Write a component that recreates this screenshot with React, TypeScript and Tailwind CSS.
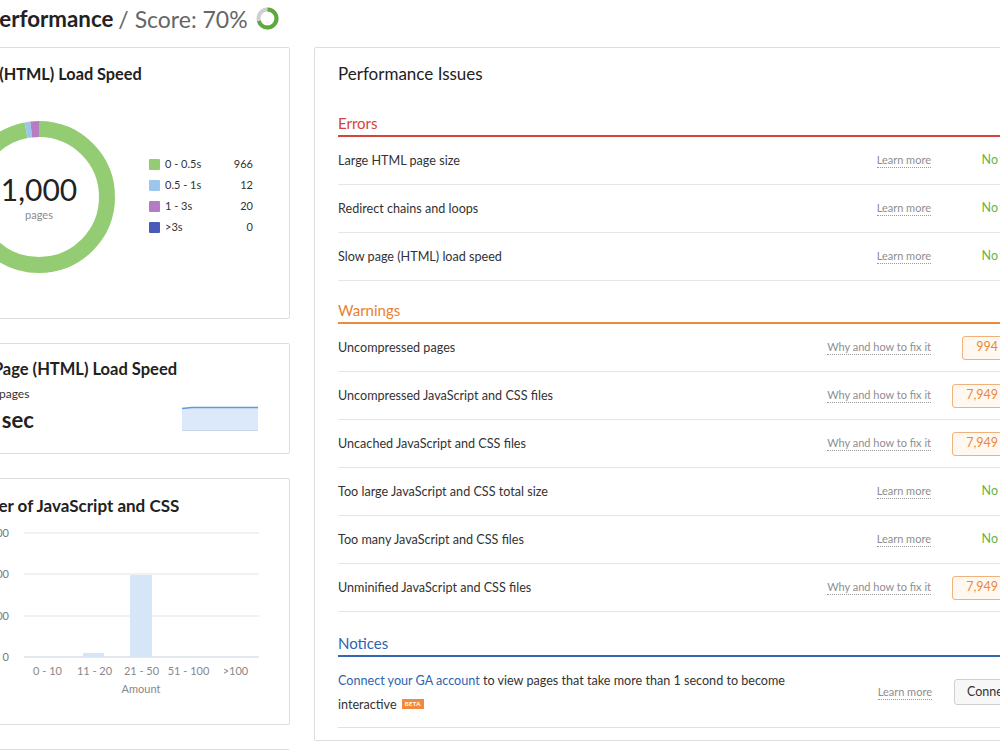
import React from "react";

const C = 2 * Math.PI * 68;
const FONT = "Lato, sans-serif";

function Donut() {
  const segs = [
    { v: 966, c: "#94cc74" },
    { v: 12, c: "#9cc6ec" },
    { v: 20, c: "#b57cc3" },
  ];
  const total = 998;
  let acc = 0;
  return (
    <svg width="152" height="152" viewBox="0 0 152 152">
      <g transform="rotate(-90 76 76)">
        {segs.map((s, i) => {
          const l = (s.v / total) * C;
          const el = (
            <circle
              key={i}
              cx="76"
              cy="76"
              r="68"
              fill="none"
              stroke={s.c}
              strokeWidth="16"
              strokeDasharray={`${l} ${C - l}`}
              strokeDashoffset={-acc}
            />
          );
          acc += l;
          return el;
        })}
      </g>
    </svg>
  );
}

function ScoreIcon() {
  const c = 2 * Math.PI * 9;
  return (
    <svg width="23" height="23" viewBox="0 0 23 23">
      <g transform="rotate(-90 11.5 11.5)">
        <circle cx="11.5" cy="11.5" r="9" fill="none" stroke="#cfcfcf" strokeWidth="4" />
        <circle
          cx="11.5"
          cy="11.5"
          r="9"
          fill="none"
          stroke="#5aab3a"
          strokeWidth="4"
          strokeDasharray={`${c * 0.7} ${c * 0.3}`}
        />
      </g>
    </svg>
  );
}

function BarChart() {
  // svg x = page x + 41, y = page y - 522
  const grid = [534, 575, 617, 658].map((y) => y - 522);
  const labels = ["1,500", "1,000", "500", "0"];
  const cats = ["0 - 10", "11 - 20", "21 - 50", "51 - 100", ">100"];
  const x0 = 23 + 41;
  const w = 47;
  return (
    <svg width="299" height="180" viewBox="0 0 299 180">
      {grid.map((y, i) => (
        <g key={i}>
          <line x1={x0} x2={258 + 41} y1={y} y2={y} stroke={i === 3 ? "#c9d3df" : "#e3e3e3"} strokeWidth="1" />
          <text x={8 + 41} y={y + 4} textAnchor="end" fontSize="11" fill="#777" fontFamily={FONT}>
            {labels[i]}
          </text>
        </g>
      ))}
      <rect x={82 + 41} y={654 - 522} width={21} height={4} fill="#d6e6f7" />
      <rect x={129 + 41} y={576 - 522} width={22} height={82} fill="#d6e6f7" />
      {cats.map((c, i) => (
        <text key={c} x={x0 + w * i + w / 2} y={676 - 522} textAnchor="middle" fontSize="11" fill="#888" fontFamily={FONT}>
          {c}
        </text>
      ))}
      <text x={140 + 41} y={694 - 522} textAnchor="middle" fontSize="11" fill="#888" fontFamily={FONT}>
        Amount
      </text>
    </svg>
  );
}

function LearnMore({ text = "Learn more" }: { text?: string }) {
  return (
    <span className="block text-[11px] text-[#8e8e8e] border-b border-dotted border-[#9a9a9a] leading-[14px] whitespace-nowrap">
      {text}
    </span>
  );
}

function Status({ v }: { v: string | null }) {
  if (!v)
    return <span className="text-[12.5px] text-[#6cb33f] pr-[14px] whitespace-nowrap">No issues</span>;
  return (
    <span className="h-[24px] px-[13px] flex items-center rounded-[3px] border border-[#f0b27a] bg-[#fff8f1] text-[12.5px] text-[#e8883a] whitespace-nowrap">
      {v} issues
    </span>
  );
}

function Row({ t, fix, v }: { t: string; fix?: boolean; v: string | null }) {
  return (
    <div className="h-[48px] flex items-center border-b border-[#e6e6e6]">
      <div className="flex-1 text-[12.6px] text-[#333] pt-[1px]">{t}</div>
      <div className="mr-[21px]">
        <LearnMore text={fix ? "Why and how to fix it" : "Learn more"} />
      </div>
      <div className="w-[96px] flex justify-end">
        <Status v={v} />
      </div>
    </div>
  );
}

function SectionHead({ t, color, mt }: { t: string; color: string; mt: string }) {
  return (
    <div className={`${mt} pb-[2px] border-b-2 ${color} text-[15px] leading-[20px]`}>{t}</div>
  );
}

export default function App() {
  return (
    <div className="w-[1000px] h-[750px] overflow-hidden bg-white font-['Lato',sans-serif] text-[#222]">
      <div className="ml-[-65px]">
        <div className="h-[38px] mb-[9px] pl-[51px] flex items-center whitespace-nowrap">
          <span className="text-[22.3px] font-bold text-[#222]">Performance</span>
          <span className="text-[23px] text-[#666] ml-[5px]">/ Score: 70%</span>
          <span className="ml-[8px] mt-[-2px]">
            <ScoreIcon />
          </span>
        </div>
        <div className="flex gap-[24px] items-start">
          <div className="w-[355px] flex flex-col gap-[24px] shrink-0">
            <div className="border border-[#dedede] rounded-[2px] pt-[16px] pl-[24px] pr-[31px] pb-[45px]">
              <div className="text-[16.3px] leading-[20px] font-bold whitespace-nowrap">Page (HTML) Load Speed</div>
              <div className="mt-[37px] flex items-center">
                <div className="relative ml-[3px] w-[152px] h-[152px]">
                  <Donut />
                  <div className="absolute inset-0 flex flex-col items-center justify-center">
                    <div className="text-[30px] leading-[34px] text-[#222]">1,000</div>
                    <div className="text-[11px] leading-[16px] text-[#8a8a8a] mt-[1px]">pages</div>
                  </div>
                </div>
                <div className="ml-[34px] w-[104px] flex flex-col mt-[-2px]">
                  {[
                    ["#94cc74", "0 - 0.5s", "966"],
                    ["#9cc6ec", "0.5 - 1s", "12"],
                    ["#b57cc3", "1 - 3s", "20"],
                    ["#4a5ab8", ">3s", "0"],
                  ].map(([c, l, n]) => (
                    <div key={l} className="h-[21px] flex items-center text-[11px] text-[#333]">
                      <span className="w-[11px] h-[11px] rounded-[1px]" style={{ background: c }} />
                      <span className="ml-[5px] flex-1">{l}</span>
                      <span>{n}</span>
                    </div>
                  ))}
                </div>
              </div>
            </div>
            <div className="border border-[#dedede] rounded-[2px] pt-[15px] pl-[24px] pr-[31px] pb-[19px]">
              <div className="text-[16.5px] leading-[20px] font-bold whitespace-nowrap ml-[-3px]">Avg. Page (HTML) Load Speed</div>
              <div className="mt-[7px] flex justify-between items-start">
                <div className="flex flex-col">
                  <div className="text-[12px] leading-[16px] text-[#333] ml-[4px]">For all pages</div>
                  <div className="text-[22px] leading-[28px] font-bold mt-[4px] ml-[-7px]">0.14 sec</div>
                </div>
                <svg width="76" height="25" viewBox="0 0 76 25" className="mt-[20px]">
                  <path d="M0 2.5 L10 1.5 L76 1.5 L76 25 L0 25 Z" fill="#dbe9fa" />
                  <path d="M0 2.5 L10 1.5 L76 1.5" fill="none" stroke="#5c9be2" strokeWidth="1.6" />
                  <line x1="0" x2="76" y1="24.5" y2="24.5" stroke="#c7d8ee" strokeWidth="1" />
                </svg>
              </div>
            </div>
            <div className="border border-[#dedede] rounded-[2px] pt-[17px] pl-[24px] pr-[31px] pb-[23px]">
              <div className="text-[17px] leading-[20px] font-bold whitespace-nowrap ml-[-8px]">Number of JavaScript and CSS</div>
              <div className="mt-[5px]">
                <BarChart />
              </div>
            </div>
            <div className="border border-[#dedede] rounded-[2px] h-[200px]" />
          </div>

          <div className="w-[758px] shrink-0 border border-[#dedede] rounded-[2px] pt-[16px] px-[23px] pb-[12px]">
            <div className="text-[17px] leading-[20px] text-[#222]">Performance Issues</div>
            <SectionHead t="Errors" color="text-[#d5443a] border-[#d5443a]" mt="mt-[29px]" />
            <Row t="Large HTML page size" v={null} />
            <Row t="Redirect chains and loops" v={null} />
            <Row t="Slow page (HTML) load speed" v={null} />
            <SectionHead t="Warnings" color="text-[#e8812f] border-[#ec8a3e]" mt="mt-[19px]" />
            <Row t="Uncompressed pages" fix v="994" />
            <Row t="Uncompressed JavaScript and CSS files" fix v="7,949" />
            <Row t="Uncached JavaScript and CSS files" fix v="7,949" />
            <Row t="Too large JavaScript and CSS total size" v={null} />
            <Row t="Too many JavaScript and CSS files" v={null} />
            <Row t="Unminified JavaScript and CSS files" fix v="7,949" />
            <SectionHead t="Notices" color="text-[#2d64b2] border-[#3567b5]" mt="mt-[21px]" />
            <div className="h-[71px] flex items-center border-b border-[#e0e0e0]">
              <div className="flex-1 text-[12.6px] leading-[24px] text-[#333] pr-[60px] pt-[1px]">
                <span className="text-[#2d64b2]">Connect your GA account</span> to view pages that take more than 1 second to become interactive{" "}
                <span className="inline-block align-middle ml-[2px] mt-[-3px] bg-[#f28a3c] text-white text-[6px] leading-[10px] px-[3px] font-bold tracking-[0.3px]">
                  BETA
                </span>
              </div>
              <div className="mr-[22px]">
                <LearnMore />
              </div>
              <div className="w-[94px] flex justify-start">
                <span className="h-[26px] w-[94px] flex items-center pl-[12px] rounded-[3px] border border-[#cfcfcf] bg-[#f7f7f7] text-[12.5px] text-[#333] whitespace-nowrap">
                  Connect GA
                </span>
              </div>
            </div>
          </div>
        </div>
      </div>
    </div>
  );
}
